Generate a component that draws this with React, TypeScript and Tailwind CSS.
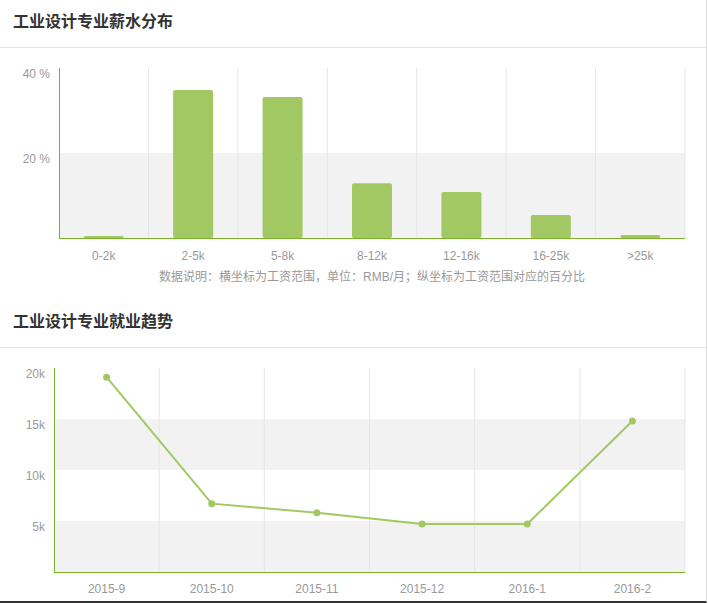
const F = '"Liberation Sans","Noto Sans CJK SC",sans-serif';

function Bars() {
  const cats = ["0-2k", "2-5k", "5-8k", "8-12k", "12-16k", "16-25k", ">25k"];
  const vals = [0.5, 34.8, 33.2, 12.9, 10.8, 5.4, 0.7];
  const x0 = 59, x1 = 685, y0 = 238, h = 170;
  const w = (x1 - x0) / 7;
  return (
    <svg width="708" height="252" viewBox="0 48 708 252" style={{ fontFamily: F }} className="block">
      <rect x={x0} y={153} width={x1 - x0} height={85} fill="#f2f2f2" />
      {[1, 2, 3, 4, 5, 6, 7].map(i => (
        <line key={i} x1={x0 + w * i} x2={x0 + w * i} y1={68} y2={y0} stroke="#e6e6e6" />
      ))}
      {vals.map((v, i) => {
        const bh = (v / 40) * h;
        const cx = x0 + w * (i + 0.5);
        return <rect key={i} x={cx - 20} y={y0 - bh} width={40} height={bh} rx={2} fill="#a1c862" />;
      })}
      <line x1={x0 + 0.5} x2={x0 + 0.5} y1={68} y2={y0} stroke="#7bb02a" />
      <line x1={x0} x2={x1} y1={y0 + 0.5} y2={y0 + 0.5} stroke="#7bb02a" />
      <text x={50} y={78} textAnchor="end" fontSize="12" fill="#999">40 %</text>
      <text x={50} y={163} textAnchor="end" fontSize="12" fill="#999">20 %</text>
      {cats.map((c, i) => (
        <text key={c} x={x0 + w * (i + 0.5)} y={260} textAnchor="middle" fontSize="12" fill="#999">{c}</text>
      ))}
      <text x={372} y={281} textAnchor="middle" fontSize="12" fill="#999">数据说明：横坐标为工资范围，单位：RMB/月；纵坐标为工资范围对应的百分比</text>
    </svg>
  );
}

function Line() {
  const cats = ["2015-9", "2015-10", "2015-11", "2015-12", "2016-1", "2016-2"];
  const vals = [19.1, 6.7, 5.8, 4.7, 4.7, 14.8];
  const x0 = 54, x1 = 685, y0 = 572, ppk = 10.2;
  const w = (x1 - x0) / 6;
  const pts = vals.map((v, i) => [x0 + w * (i + 0.5), y0 - v * ppk]);
  return (
    <svg width="708" height="253" viewBox="0 348 708 253" style={{ fontFamily: F }} className="block">
      <rect x={x0} y={419} width={x1 - x0} height={51} fill="#f2f2f2" />
      <rect x={x0} y={521} width={x1 - x0} height={51} fill="#f2f2f2" />
      {[1, 2, 3, 4, 5, 6].map(i => (
        <line key={i} x1={x0 + w * i} x2={x0 + w * i} y1={368} y2={y0} stroke="#e6e6e6" />
      ))}
      <line x1={x0 + 0.5} x2={x0 + 0.5} y1={368} y2={y0} stroke="#7bb02a" />
      <line x1={x0} x2={x1} y1={y0 + 0.5} y2={y0 + 0.5} stroke="#7bb02a" />
      <polyline points={pts.map(p => p.join(",")).join(" ")} fill="none" stroke="#a1c862" strokeWidth="2" />
      {pts.map((p, i) => <circle key={i} cx={p[0]} cy={p[1]} r={3.5} fill="#a1c862" />)}
      {[["20k", 378], ["15k", 429], ["10k", 480], ["5k", 531]].map(([t, y]) => (
        <text key={t} x={45} y={y} textAnchor="end" fontSize="12" fill="#999">{t}</text>
      ))}
      {cats.map((c, i) => (
        <text key={c} x={x0 + w * (i + 0.5)} y={593} textAnchor="middle" fontSize="12" fill="#999">{c}</text>
      ))}
    </svg>
  );
}

export default function App() {
  return (
    <div className="w-[708px] h-[603px] bg-white overflow-hidden" style={{ fontFamily: F }}>
      <div className="w-[707px] border-r border-[#e0e0e0] border-b-2 border-b-[#333]">
        <div className="h-[48px] border-b border-[#e3e3e3] flex items-center pl-[13px] pb-[3px]">
          <h2 className="text-[16px] font-bold text-[#333]">工业设计专业薪水分布</h2>
        </div>
        <Bars />
        <div className="h-[48px] border-b border-[#e3e3e3] flex items-center pl-[13px] pb-[3px]">
          <h2 className="text-[16px] font-bold text-[#333]">工业设计专业就业趋势</h2>
        </div>
        <Line />
      </div>
    </div>
  );
}
